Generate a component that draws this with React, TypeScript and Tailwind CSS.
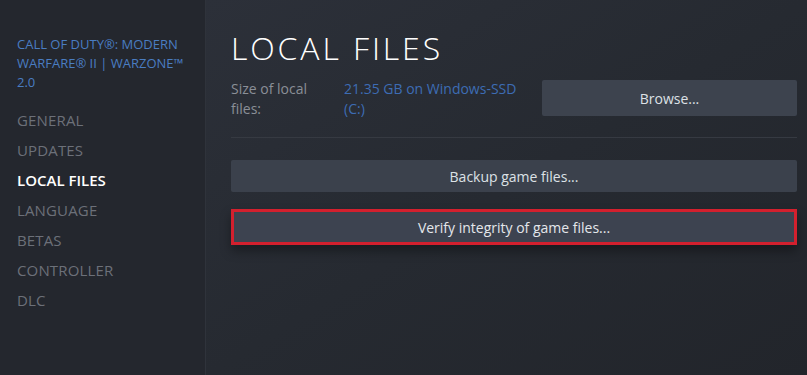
import React from "react";

const items = ["GENERAL", "UPDATES", "LOCAL FILES", "LANGUAGE", "BETAS", "CONTROLLER", "DLC"];

export default function App() {
  return (
    <div
      className="flex w-[807px] h-[375px] overflow-hidden"
      style={{ fontFamily: '"Open Sans", "Noto Sans", Arial, sans-serif' }}
    >
      <aside className="w-[206px] shrink-0 bg-[#24272e] border-r border-[#2f333b] pl-[17px] pt-[35px]">
        <div className="text-[13px] leading-[19px] text-[#4a7dc2] w-[185px]">
          CALL OF DUTY®: MODERN WARFARE® II | WARZONE™ 2.0
        </div>
        <nav className="mt-[13px] flex flex-col">
          {items.map((it) => (
            <div
              key={it}
              className={
                it === "LOCAL FILES"
                  ? "h-[30px] leading-[30px] text-[15px] font-semibold text-white"
                  : "h-[30px] leading-[30px] text-[15px] tracking-[0.01em] text-[#6c7079]"
              }
            >
              {it}
            </div>
          ))}
        </nav>
      </aside>
      <main className="flex-1 bg-gradient-to-br from-[#2c3039] via-[#262a31] to-[#22252b] pl-[25px] pr-[10px] pt-[29px]">
        <h1 className="text-[32px] leading-[38px] font-light tracking-[0.09em] text-white">LOCAL FILES</h1>
        <div className="mt-[10px] flex items-start">
          <div className="w-[113px] pr-[22px] text-[14px] leading-[20px] text-[#8a8f97] pt-[2px]">
            Size of local files:
          </div>
          <div className="w-[198px] pr-[12px] text-[14px] leading-[20px] text-[#3d6cb4] pt-[2px]">
            21.35 GB on Windows-SSD (C:)
          </div>
          <button className="flex-1 h-[36px] mt-[3px] bg-[#3d434e] text-[14px] text-[#dde1e6] rounded-[2px]">
            Browse...
          </button>
        </div>
        <div className="mt-[18px] h-px bg-[#363a42]" />
        <button className="mt-[22px] w-full h-[32px] bg-[#3b414c] text-[14px] text-[#dde1e6] rounded-[2px]">
          Backup game files...
        </button>
        <div className="mt-[17px] border-[3px] border-[#d3202e] shadow-[0_6px_10px_rgba(0,0,0,0.35)]">
          <button className="w-full h-[30px] bg-[#3d4350] text-[14px] text-[#e4e7eb]">
            Verify integrity of game files...
          </button>
        </div>
      </main>
    </div>
  );
}
